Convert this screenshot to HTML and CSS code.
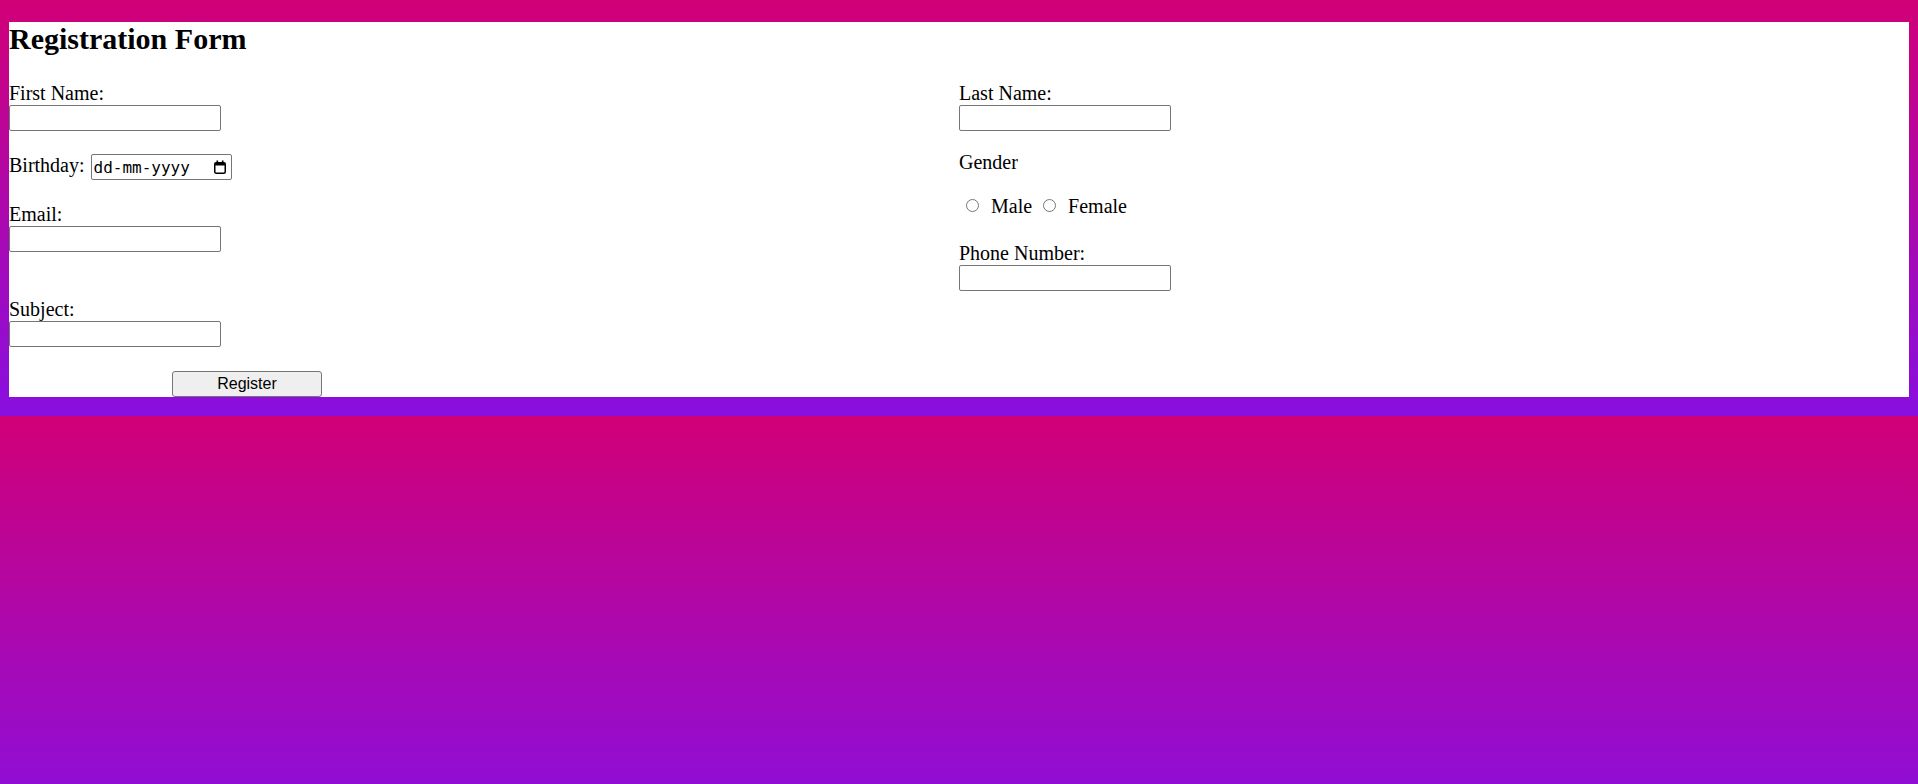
FILE: index.html
```html
<!DOCTYPE html>
<html lang="en">
<head>
<meta charset="utf-8">
<title>Registration Form</title>
<link rel="stylesheet" href="styles.css">
</head>
<body>
<div class="page">
  <form class="card">
    <h1 class="title">Registration Form</h1>
    <div class="grid">
      <div class="col">
        <div class="field">
          <label class="label" for="first">First Name:</label>
          <input class="text-input" type="text" id="first">
        </div>
        <div class="field row birthday">
          <label class="label" for="birthday">Birthday:</label>
          <div class="date-field">
            <input class="date-text" type="text" id="birthday" placeholder="dd-mm-yyyy">
            <svg class="cal-icon" width="14" height="14" viewBox="0 0 14 14" aria-hidden="true">
              <rect x="1.75" y="2.75" width="10.5" height="10.5" rx="1.5" fill="none" stroke="#000" stroke-width="1.5"/>
              <rect x="1.75" y="2.75" width="10.5" height="2.75" fill="#000"/>
              <rect x="3.5" y="0.5" width="1.6" height="3" fill="#000"/>
              <rect x="8.9" y="0.5" width="1.6" height="3" fill="#000"/>
            </svg>
          </div>
        </div>
        <div class="field email">
          <label class="label" for="email">Email:</label>
          <input class="text-input" type="email" id="email">
        </div>
        <div class="field subject">
          <label class="label" for="subject">Subject:</label>
          <input class="text-input" type="text" id="subject">
        </div>
      </div>
      <div class="col">
        <div class="field">
          <label class="label" for="last">Last Name:</label>
          <input class="text-input" type="text" id="last">
        </div>
        <div class="gender-title">Gender</div>
        <div class="radios">
          <input class="radio radio-first" type="radio" name="gender" id="male"><label class="radio-label" for="male">Male</label>
          <input class="radio radio-second" type="radio" name="gender" id="female"><label class="radio-label" for="female">Female</label>
        </div>
        <div class="field phone">
          <label class="label" for="phone">Phone Number:</label>
          <input class="text-input" type="tel" id="phone">
        </div>
      </div>
    </div>
    <div class="actions">
      <button class="btn" type="submit">Register</button>
    </div>
  </form>
</div>
</body>
</html>
```
FILE: styles.css
```css
html, body {
  margin: 0;
  padding: 0;
}

body {
  background: linear-gradient(to bottom, #d10077, #880fe0);
  font-family: "Liberation Serif", "Times New Roman", serif;
  color: #000;
}

.page {
  padding: 22px 9px 19px;
}

.card {
  background: #fff;
  display: flex;
  flex-direction: column;
}

.title {
  margin: 0 0 26px;
  font-size: 30px;
  font-weight: bold;
  line-height: normal;
}

.grid {
  display: grid;
  grid-template-columns: 1fr 1fr;
}

.col {
  display: flex;
  flex-direction: column;
  align-items: flex-start;
}

.field {
  display: flex;
  flex-direction: column;
  align-items: flex-start;
}

.label {
  font-size: 20px;
  line-height: 23px;
}

.row {
  flex-direction: row;
  align-items: flex-start;
  gap: 6px;
}

.birthday {
  margin-top: 23px;
}

.email {
  margin-top: 23px;
}

.subject {
  margin-top: 46px;
}

.text-input {
  box-sizing: border-box;
  width: 212px;
  height: 26px;
  margin: 0;
  border: 1px solid #767676;
  border-radius: 2px;
  padding: 1px 2px;
  font-family: "Liberation Sans", Arial, sans-serif;
  font-size: 13px;
  background: #fff;
}

.date-field {
  box-sizing: border-box;
  width: 141px;
  height: 26px;
  display: flex;
  align-items: center;
  border: 1px solid #767676;
  border-radius: 2px;
  padding: 0 4px 0 2px;
  background: #fff;
}

.date-text {
  flex: 1;
  min-width: 0;
  border: none;
  outline: none;
  padding: 0;
  margin: 0;
  background: transparent;
  font-family: "DejaVu Sans Mono", "Liberation Mono", monospace;
  font-size: 16px;
  color: #000;
}

.date-text::placeholder {
  color: #000;
  opacity: 1;
}

.cal-icon {
  flex: none;
  display: block;
}

.gender-title {
  font-size: 20px;
  line-height: 23px;
  margin-top: 20px;
}

.radios {
  margin-top: 21px;
  display: flex;
  align-items: center;
  font-size: 20px;
  line-height: 23px;
}

.radio {
  width: 13px;
  height: 13px;
  margin: 0 12px 0 0;
  position: relative;
  top: -1px;
}

.radio-first {
  margin-left: 7px;
}

.radio-second {
  margin-left: 11px;
}

.radio-label {
  font-size: 20px;
}

.phone {
  margin-top: 24px;
}

.actions {
  margin-top: 24px;
  display: flex;
}

.btn {
  box-sizing: border-box;
  width: 150px;
  height: 25.5px;
  margin: 0 0 0 163px;
  border: 1px solid #767676;
  border-radius: 3px;
  background: #efefef;
  font-family: "Liberation Sans", Arial, sans-serif;
  font-size: 16px;
  color: #000;
  padding: 0;
}
```
